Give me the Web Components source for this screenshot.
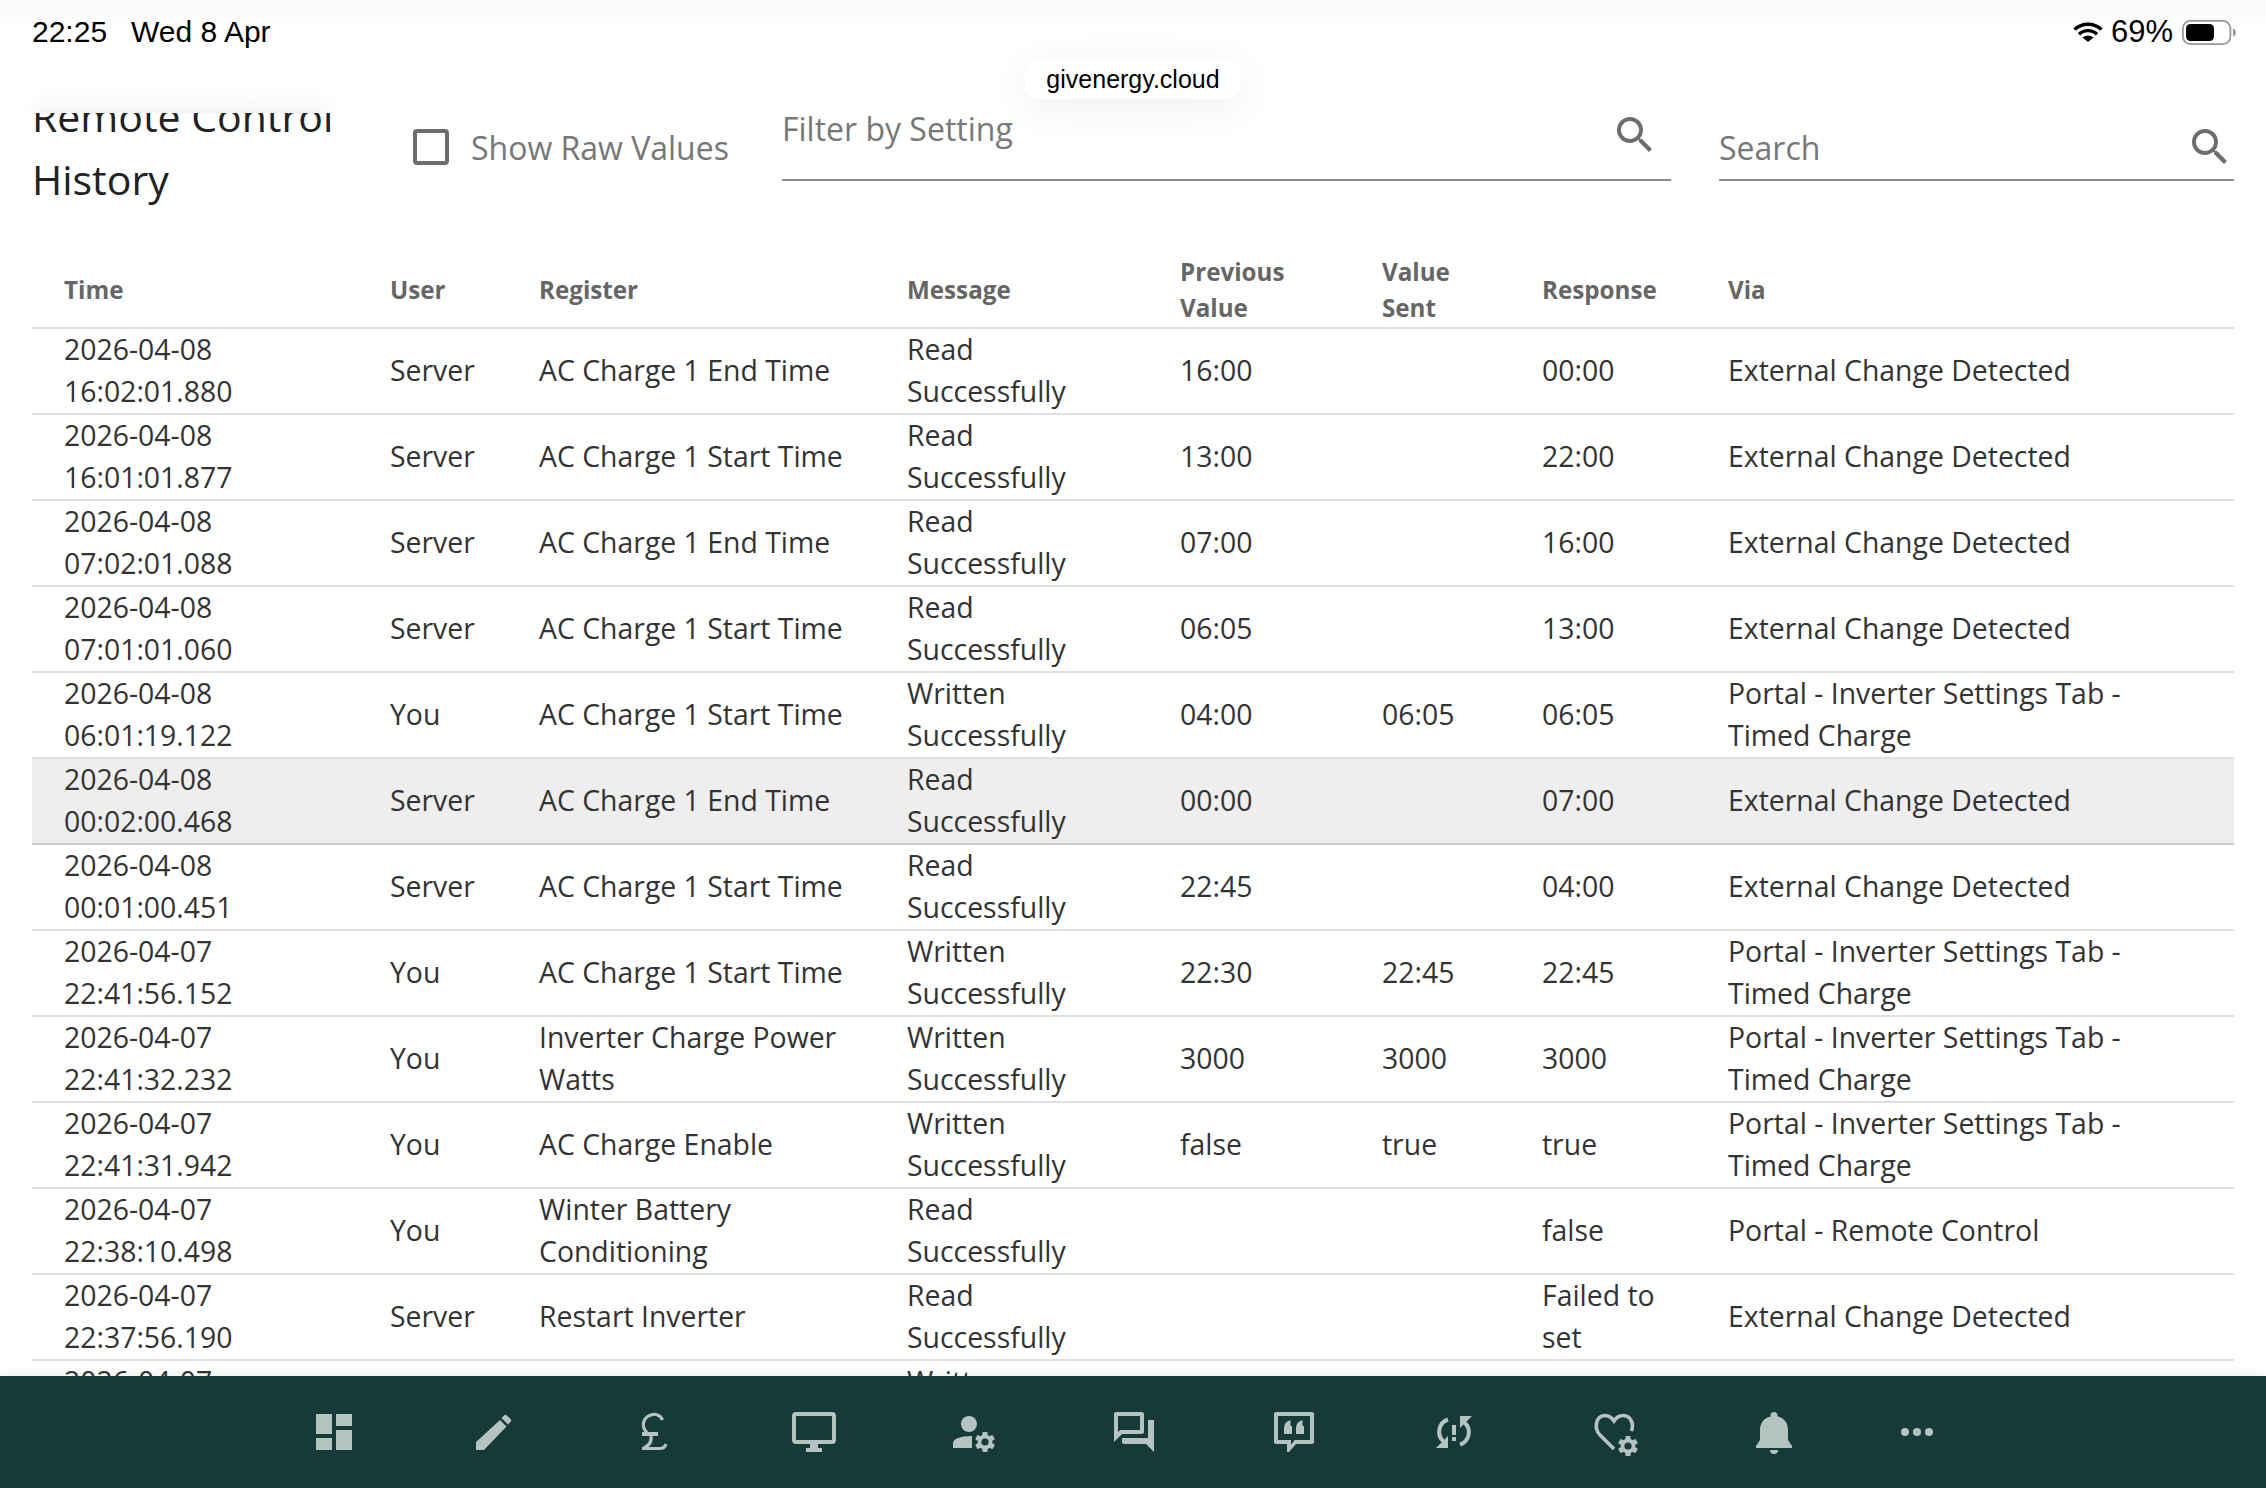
<!DOCTYPE html>
<html lang="en">
<head>
<meta charset="utf-8">
<title>Remote Control History</title>
<style>
  html, body { margin: 0; height: 100%; background: #fff; }
  body { font-family: "Open Sans", sans-serif; overflow: hidden; }
</style>
</head>
<body>
<history-app></history-app>

<script>
const HEAD = ["Time", "User", "Register", "Message", "Previous Value", "Value Sent", "Response", "Via"];
const READ = "Read Successfully";
const WRITE = "Written Successfully";
const EXT = "External Change Detected";
const TAB = "Portal - Inverter Settings Tab - Timed Charge";
const ROWS = [
  ["2026-04-08 16:02:01.880", "Server", "AC Charge 1 End Time", READ, "16:00", "", "00:00", EXT],
  ["2026-04-08 16:01:01.877", "Server", "AC Charge 1 Start Time", READ, "13:00", "", "22:00", EXT],
  ["2026-04-08 07:02:01.088", "Server", "AC Charge 1 End Time", READ, "07:00", "", "16:00", EXT],
  ["2026-04-08 07:01:01.060", "Server", "AC Charge 1 Start Time", READ, "06:05", "", "13:00", EXT],
  ["2026-04-08 06:01:19.122", "You", "AC Charge 1 Start Time", WRITE, "04:00", "06:05", "06:05", TAB],
  ["2026-04-08 00:02:00.468", "Server", "AC Charge 1 End Time", READ, "00:00", "", "07:00", EXT, "hover"],
  ["2026-04-08 00:01:00.451", "Server", "AC Charge 1 Start Time", READ, "22:45", "", "04:00", EXT],
  ["2026-04-07 22:41:56.152", "You", "AC Charge 1 Start Time", WRITE, "22:30", "22:45", "22:45", TAB],
  ["2026-04-07 22:41:32.232", "You", "Inverter Charge Power Watts", WRITE, "3000", "3000", "3000", TAB],
  ["2026-04-07 22:41:31.942", "You", "AC Charge Enable", WRITE, "false", "true", "true", TAB],
  ["2026-04-07 22:38:10.498", "You", "Winter Battery Conditioning", READ, "", "", "false", "Portal - Remote Control"],
  ["2026-04-07 22:37:56.190", "Server", "Restart Inverter", READ, "", "", "Failed to set", EXT],
  // only the top of this row shows above the nav
  ["2026-04-07", "", "", "Written", "", "", "", "", "cut"],
];

class StatusBar extends HTMLElement {
  constructor() {
    super();
    this.attachShadow({ mode: "open" });
    this.shadowRoot.innerHTML = `
      <style>
        :host { position: absolute; top: 0; left: 0; right: 0; height: 113px; z-index: 2; display: block;
          background: linear-gradient(#f9f9f9 0, #fff 30px);
          font-family: "Liberation Sans", sans-serif; color: #000; font-size: 30px; }
        .bar { display: flex; justify-content: space-between; align-items: center; height: 32px; padding: 16px 30px 0 32px; }
        .side { display: flex; align-items: center; }
        .date { margin-left: 24px; }
        .wifi { margin-right: 8px; }
        .pct { font-size: 31px; }
        .batt { margin-left: 9px; }
        .ghost { position: absolute; left: 25px; top: 88px; width: 312px; height: 25px;
          background: linear-gradient(rgba(244,244,244,0), #f5f5f5);
          -webkit-mask-image: linear-gradient(90deg, transparent, #000 24px, #000 288px, transparent);
          mask-image: linear-gradient(90deg, transparent, #000 24px, #000 288px, transparent); }
        .url { position: absolute; top: 59px; left: 1025px; width: 216px; height: 40px; border-radius: 16px; background: #fff;
          display: flex; align-items: center; justify-content: center; font-size: 25px; box-shadow: 0 8px 44px rgba(0,0,0,.07); }
      </style>
      <div class="bar">
        <div class="side"><span>22:25</span><span class="date">Wed 8 Apr</span></div>
        <div class="side">
          <svg class="wifi" width="30" height="20" viewBox="0 0 30 20">
            <path d="M1.500 7.500A20 20 0 0 1 28.500 7.500M6 12.200A13 13 0 0 1 24 12.200" fill="none" stroke="#000" stroke-width="3.400"/>
            <path d="M9.500 15.500Q15 11.500 20.500 15.500L15 20z" fill="#000"/>
          </svg>
          <span class="pct">69%</span>
          <svg class="batt" width="54" height="25" viewBox="0 0 54 25">
            <rect x=".9" y=".9" width="47.500" height="23.200" rx="7.500" fill="none" stroke="#999" stroke-width="1.800"/>
            <rect x="4" y="4" width="28" height="17" rx="4.500" fill="#000"/>
            <path d="M51 8.500v8c1.800-.6 3-2.300 3-4s-1.200-3.400-3-4z" fill="#999"/>
          </svg>
        </div>
      </div>
      <div class="ghost"></div>
      <div class="url">givenergy.cloud</div>`;
  }
}
customElements.define("status-bar", StatusBar);

class SearchField extends HTMLElement {
  constructor() {
    super();
    this.attachShadow({ mode: "open" });
    this.shadowRoot.innerHTML = `
      <style>
        :host { display: block; height: 64px; box-sizing: border-box; border-bottom: 2px solid #8c8c8c; color: #777; font-size: 32px; }
        .in { display: flex; justify-content: space-between; align-items: center; height: 60px; }
        svg { width: 48px; height: 48px; fill: #6d6d6d; }
        :host([raised]) span { margin-bottom: 38px; }
        :host([raised]) svg { margin-bottom: 24px; margin-right: 12px; }
      </style>
      <div class="in"><span><slot></slot></span>
        <svg viewBox="0 0 24 24"><path d="M15.500 14h-.79l-.28-.27A6.470 6.470 0 0 0 16 9.500 6.500 6.500 0 1 0 9.500 16c1.610 0 3.090-.59 4.230-1.570l.27.28v.79l5 4.990L20.490 19l-4.990-5zm-6 0C7.010 14 5 11.990 5 9.500S7.010 5 9.500 5 14 7.010 14 9.500 11.990 14 9.500 14z"/></svg>
      </div>`;
  }
}
customElements.define("search-field", SearchField);

class HistoryToolbar extends HTMLElement {
  constructor() {
    super();
    this.attachShadow({ mode: "open" });
    this.shadowRoot.innerHTML = `
      <style>
        :host { display: grid; grid-template-columns: 381px 369px 937px 515px; height: 251px; padding: 0 32px; box-sizing: border-box; }
        h1 { margin: 0; font-weight: 400; font-size: 41px; line-height: 63px; color: #222; width: 345px; padding-top: 85px; }
        .raw { display: flex; align-items: center; gap: 22px; height: 60px; margin-top: 117px; color: #777; font-size: 32px; }
        .box { width: 36px; height: 36px; box-sizing: border-box; border: 4.500px solid #6d6d6d; border-radius: 4px; }
        search-field { margin-top: 117px; align-self: start; }
        .filter { margin-right: 48px; }
      </style>
      <h1>Remote Control History</h1>
      <div class="raw"><span class="box"></span><span>Show Raw Values</span></div>
      <search-field class="filter" raised>Filter by Setting</search-field>
      <search-field class="search">Search</search-field>`;
  }
}
customElements.define("history-toolbar", HistoryToolbar);

class HistoryTable extends HTMLElement {
  constructor() {
    super();
    this.attachShadow({ mode: "open" });
    const head = HEAD.map(h => `<th>${h}</th>`).join("");
    const body = ROWS.map(r => {
      const cells = r.slice(0, 8).map(c => `<td><div>${c}</div></td>`).join("");
      return `<tr class="${r[8] || ""}">${cells}</tr>`;
    }).join("");
    this.shadowRoot.innerHTML = `
      <style>
        :host { display: block; margin: 0 32px; }
        table { width: 100%; table-layout: fixed; border-collapse: separate; border-spacing: 0; font-size: 28.400px; line-height: 42px; color: #333; }
        th { font-size: 24.200px; line-height: 36px; font-weight: 700; color: #666; text-align: left; height: 78px; padding: 2px 32px 0 0; border-bottom: 2px solid #e0e0e0; vertical-align: middle; box-sizing: border-box; }
        td { height: 86px; padding: 0 32px 0 0; border-bottom: 2px solid #e0e0e0; vertical-align: middle; box-sizing: border-box; }
        td div { margin: -1px 0 1px; }
        th:first-child, td:first-child { padding-left: 32px; }
        td:nth-child(3) { padding-right: 20px; }
        td:nth-child(4) { padding-right: 48px; }
        tr.hover td { background: #eee; border-bottom-color: #ccc; }
        tr.cut td { vertical-align: top; }
      </style>
      <table>
        <colgroup>
          <col style="width:358px"><col style="width:149px"><col style="width:368px"><col style="width:273px">
          <col style="width:202px"><col style="width:160px"><col style="width:186px"><col>
        </colgroup>
        <thead><tr>${head}</tr></thead>
        <tbody>${body}</tbody>
      </table>`;
  }
}
customElements.define("history-table", HistoryTable);

// gear used by two of the nav icons, r is the tooth radius
function gear(cx, cy, r) {
  let teeth = "";
  for (let a = 0; a < 360; a += 60) {
    teeth += `<rect x="${-r * .26}" y="${-r}" width="${r * .52}" height="${r * .5}" rx="1" transform="rotate(${a})"/>`;
  }
  return `<g transform="translate(${cx} ${cy})">${teeth}<circle r="${r * .74}"/><circle r="${r * .36}" fill="#163a37"/></g>`;
}

const NAV_ICONS = [
  // dashboard
  `<path d="M-18-18H-2V2H-18zM-18 6H-2V18H-18zM2-18H18V-6H2zM2-2H18V18H2z"/>`,
  // pencil
  `<path d="M-18 18V10L6-12 12.500-5.500-10 18zM7.500-14 10-16.500q1.500-1.500 3 0l3.500 3.500q1.500 1.500 0 3L14-7.500z"/>`,
  // pound
  `<path d="M8.500-12C6-18 0-18.500-3-17-10-15-14-7-7 1M-3 4C-2 9-4 13-10 16M-12 16.500H6C9 16.500 11 15 12 12" fill="none" stroke="#b5c4c1" stroke-width="3.200"/><path d="M-12 0H4V4H-12z"/>`,
  // monitor
  `<rect x="-20" y="-18" width="40" height="28" rx="2" fill="none" stroke="#b5c4c1" stroke-width="4"/><path d="M-4 12H4V16H8V20H-8V16H-4z"/>`,
  // user settings
  `<circle cx="-5" cy="-8" r="8"/><path d="M-21 16V11C-21 7-14 4-2 4V16z"/>${gear(11, 10, 10)}`,
  // chat
  `<path fill-rule="evenodd" d="M-18-20H8a2 2 0 0 1 2 2V0a2 2 0 0 1-2 2H-12L-20 10V-18a2 2 0 0 1 2-2zM-16-16V0L-14-2H6V-16z"/><path d="M14-12H20V20L12 12H-10a2 2 0 0 1-2-2V6H14z"/>`,
  // quote bubble
  `<path fill-rule="evenodd" d="M-18-20H18a2 2 0 0 1 2 2V10a2 2 0 0 1-2 2H2L-5 20H-7V12H-18a2 2 0 0 1-2-2V-18a2 2 0 0 1 2-2zM-16-16V8H-3V13L.5 8H16V-16z"/><path d="M-10 2V-4Q-10-10-3.500-12V-6H-2V2zM2 2V-4Q2-10 8.500-12V-6H10V2z"/>`,
  // sync problem
  `<path d="M-6-12.500A13 13 0 0 0-10.500 9.500M6 12.500A13 13 0 0 0 10.500-9.500" fill="none" stroke="#b5c4c1" stroke-width="4"/><path d="M-6 4V16H-18zM6-4V-16H18zM-2-7H2V3H-2zM-2 5H2V9H-2z"/>`,
  // heart settings
  `<path d="M0 17-14 3C-20-3-19-16-9-16.500-5-16.500-2-14 0-11 2-14 5-16.500 9-16.500 17-16.500 20-8 17.500-1" fill="none" stroke="#b5c4c1" stroke-width="3.600"/>${gear(14, 14, 10)}`,
  // bell
  `<path d="M0-20a3.500 3.500 0 0 1 3.500 3.500V-15.500C10-14 14-9 14-2V8L18 14V16H-18V14L-14 8V-2C-14-9-10-14-3.500-15.500V-16.500A3.500 3.500 0 0 1 0-20zM-4 18H4A4 4 0 0 1-4 18z"/>`,
  // more
  `<circle cx="-12" r="4"/><circle r="4"/><circle cx="12" r="4"/>`,
];

class NavBar extends HTMLElement {
  constructor() {
    super();
    this.attachShadow({ mode: "open" });
    const items = NAV_ICONS.map(p => `<span class="i"><svg viewBox="-30 -30 60 60">${p}</svg></span>`).join("");
    this.shadowRoot.innerHTML = `
      <style>
        :host { display: flex; align-items: center; height: 112px; padding-left: 254px; background: #163a37; flex: none; position: relative; z-index: 3; box-shadow: 0 -4px 10px rgba(0,0,0,.05); }
        .i { width: 160px; height: 112px; display: flex; align-items: center; justify-content: center; }
        .i:last-child { width: 126px; }
        svg { width: 60px; height: 60px; fill: #b5c4c1; }
      </style>
      ${items}`;
  }
}
customElements.define("nav-bar", NavBar);

class HistoryApp extends HTMLElement {
  constructor() {
    super();
    this.attachShadow({ mode: "open" });
    this.shadowRoot.innerHTML = `
      <style>
        :host { display: flex; flex-direction: column; height: 1488px; position: relative; overflow: hidden; background: #fff; }
        main { flex: 1; min-height: 0; overflow: hidden; }
      </style>
      <status-bar></status-bar>
      <main>
        <history-toolbar></history-toolbar>
        <history-table></history-table>
      </main>
      <nav-bar></nav-bar>`;
  }
}
customElements.define("history-app", HistoryApp);
</script>
</body>
</html>
